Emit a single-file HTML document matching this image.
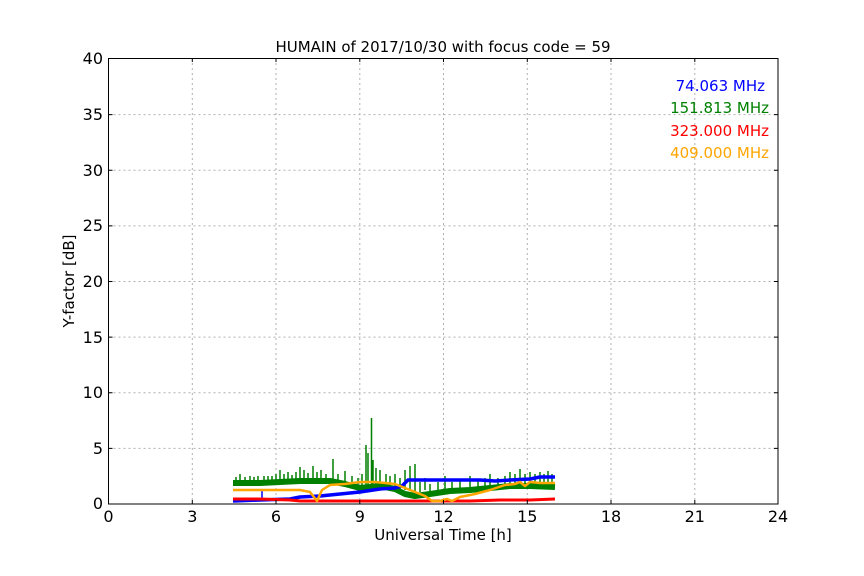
<!DOCTYPE html>
<html><head><meta charset="utf-8"><style>
html,body{margin:0;padding:0;background:#fff;}
svg{display:block;font-family:"DejaVu Sans","Liberation Sans",sans-serif;}
</style></head><body>
<svg width="864" height="576" viewBox="0 0 864 576" xmlns="http://www.w3.org/2000/svg">
<rect width="864" height="576" fill="#fff"/>
<g stroke="#b0b0b0" stroke-width="1" stroke-dasharray="2,3" fill="none">
<line x1="192.3" y1="58" x2="192.3" y2="504"/><line x1="276" y1="58" x2="276" y2="504"/><line x1="359.8" y1="58" x2="359.8" y2="504"/><line x1="443.5" y1="58" x2="443.5" y2="504"/><line x1="527.3" y1="58" x2="527.3" y2="504"/><line x1="611" y1="58" x2="611" y2="504"/><line x1="694.8" y1="58" x2="694.8" y2="504"/>
<line x1="108.5" y1="448.4" x2="778" y2="448.4"/><line x1="108.5" y1="392.8" x2="778" y2="392.8"/>
<line x1="108.5" y1="337.1" x2="778" y2="337.1"/><line x1="108.5" y1="281.5" x2="778" y2="281.5"/>
<line x1="108.5" y1="225.9" x2="778" y2="225.9"/><line x1="108.5" y1="170.3" x2="778" y2="170.3"/>
<line x1="108.5" y1="114.6" x2="778" y2="114.6"/>
</g>
<!-- green -->
<g fill="none" stroke="#008000" stroke-linejoin="round">
<polyline stroke-width="6" points="233,483 260,483 280,482 300,481 330,481 345,484 360,488 380,486 395,489 405,494 415,496 430,494 450,491 470,490 490,488 510,486 530,486 555,487"/>
<path stroke-width="1.5" d="M236,481V477 M240,480V474 M245,481V477 M250,481V476 M254,481V477 M258,480V476 M264,481V476 M268,480V476 M272,480V476 M276,480V474 M280,480V470 M284,480V474 M288,480V472 M292,480V475 M296,480V472 M300,480V467 M304,480V470 M308,480V473 M313,480V466 M317,480V472 M321,480V470 M326,480V474 M333,481V459 M338,482V474 M345,482V471 M352,484V476 M358,485V478 M362,486V474 M366,486V445 M368,486V453 M371.5,486V418 M373,486V460 M376,486V468 M380,486V470 M386,487V474 M390,487V476 M395,488V474 M400,489V478 M405,490V470 M410,490V466 M415,492V464 M420,492V482 M425,490V478 M430,491V484 M438,490V482 M445,489V476 M452,489V482 M460,489V480 M470,488V476 M478,488V480 M485,488V478 M490,487V474 M498,486V478 M505,485V476 M510,484V472 M515,484V474 M520,484V469 M525,484V474 M530,484V472 M535,484V474 M540,484V472 M544,484V474 M548,484V471 M552,484V474"/>
</g>
<!-- blue -->
<polyline fill="none" stroke="#0000ff" stroke-width="3.5" stroke-linejoin="round" points="233,501 260,500 290,499 300,497 320,496 340,494 360,492 380,489 395,488 402,486 408,480 430,480 460,480 480,480 495,481 510,480 530,479 540,477 555,477"/>
<line x1="262" y1="499" x2="262" y2="491" stroke="#0000ff" stroke-width="1.5"/>
<!-- red -->
<polyline fill="none" stroke="#ff0000" stroke-width="3" points="233,499 260,499 290,500 300,501 330,501 360,501 400,501 440,501 470,501 500,500 530,500 555,499"/>
<!-- orange -->
<polyline fill="none" stroke="#ffa500" stroke-width="2.5" stroke-linejoin="round" points="233,490 270,490 300,490 310,492 317,501 322,490 330,485 345,484 360,482 375,482 385,483 395,484 405,488 415,492 425,496 432,501 440,501 447,499 452,501 460,497 475,494 490,490 505,485 515,484 520,482 525,486 530,482 540,483 555,483"/>
<!-- axes box -->
<rect x="108.5" y="58.5" width="669.5" height="445.5" fill="none" stroke="#000" stroke-width="1"/>
<g stroke="#000" stroke-width="1">
<path d="M192.3,504v-4 M276,504v-4 M359.8,504v-4 M443.5,504v-4 M527.3,504v-4 M611,504v-4 M694.8,504v-4 M192.3,58v4 M276,58v4 M359.8,58v4 M443.5,58v4 M527.3,58v4 M611,58v4 M694.8,58v4"/>
<path d="M108.5,448.4h4 M108.5,392.8h4 M108.5,337.1h4 M108.5,281.5h4 M108.5,225.9h4 M108.5,170.3h4 M108.5,114.6h4"/>
<path d="M778,448.4h-4 M778,392.8h-4 M778,337.1h-4 M778,281.5h-4 M778,225.9h-4 M778,170.3h-4 M778,114.6h-4"/>
</g>
<g font-size="16" fill="#000" text-anchor="middle">
<text x="108.5" y="522">0</text><text x="192.3" y="522">3</text><text x="276" y="522">6</text><text x="359.8" y="522">9</text>
<text x="443.5" y="522">12</text><text x="527.3" y="522">15</text><text x="611" y="522">18</text><text x="694.8" y="522">21</text><text x="778" y="522">24</text>
</g>
<g font-size="16" fill="#000" text-anchor="end">
<text x="103" y="509">0</text><text x="103" y="454">5</text><text x="103" y="398">10</text><text x="103" y="343">15</text>
<text x="103" y="287">20</text><text x="103" y="231">25</text><text x="103" y="176">30</text><text x="103" y="120">35</text><text x="103" y="64">40</text>
</g>
<text x="443" y="540" font-size="15" text-anchor="middle">Universal Time [h]</text>
<text x="0" y="0" font-size="15" text-anchor="middle" transform="translate(74,281) rotate(-90)">Y-factor [dB]</text>
<text x="443" y="52" font-size="15" text-anchor="middle">HUMAIN of 2017/10/30 with focus code = 59</text>
<g font-size="15" text-anchor="end">
<text x="765" y="91" fill="#0000ff">74.063 MHz</text>
<text x="769" y="113" fill="#008000">151.813 MHz</text>
<text x="769" y="136" fill="#ff0000">323.000 MHz</text>
<text x="769" y="158" fill="#ffa500">409.000 MHz</text>
</g>
</svg>
</body></html>
